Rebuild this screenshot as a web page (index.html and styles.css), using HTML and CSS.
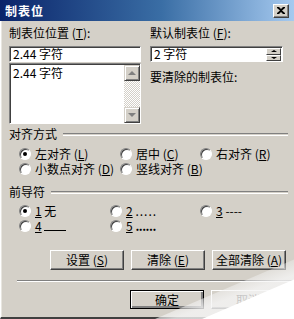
FILE: index.html
```html
<!DOCTYPE html>
<html lang="zh-CN">
<head>
<meta charset="UTF-8" />
<title>制表位</title>
<link rel="stylesheet" href="styles.css">
</head>
<body>

<div class="dialog">

  <!-- Title bar -->
  <div class="titlebar">
    <span class="title">制表位</span>
    <button class="close-btn" aria-label="关闭">
      <svg width="8" height="7" viewBox="0 0 8 7"><path d="M0 0h2l2 2 2-2h2v1L5 3.5 8 6v1H6L4 5 2 7H0V6l3-2.5L0 1z" fill="#000"/></svg>
    </button>
  </div>

  <div class="content">

    <!-- Top: positions -->
    <div class="top">
      <div class="col-left">
        <div class="label">制表位位置 (<u>T</u>):</div>
        <div class="field">2.44 字符</div>
        <div class="listbox">
          <div class="list-items">
            <div>2.44 字符</div>
          </div>
          <div class="scrollbar">
            <div class="sb-btn"><span class="arrow up gray"></span></div>
            <div class="sb-track"></div>
            <div class="sb-btn"><span class="arrow down gray"></span></div>
          </div>
        </div>
      </div>
      <div class="col-right">
        <div class="label">默认制表位 (<u>F</u>):</div>
        <div class="field spinner">
          <span class="spin-value">2 字符</span>
          <div class="spin-btns">
            <div class="spin-btn"><span class="arrow up small"></span></div>
            <div class="spin-btn"><span class="arrow down small"></span></div>
          </div>
        </div>
        <div class="label clear-label">要清除的制表位:</div>
      </div>
    </div>

    <!-- Alignment -->
    <div class="group-head">
      <span>对齐方式</span>
      <span class="etched"></span>
    </div>
    <div class="radio-grid">
      <label class="radio-item"><span class="radio checked"></span>左对齐 (<u>L</u>)</label>
      <label class="radio-item"><span class="radio"></span>居中 (<u>C</u>)</label>
      <label class="radio-item"><span class="radio"></span>右对齐 (<u>R</u>)</label>
      <label class="radio-item"><span class="radio"></span>小数点对齐 (<u>D</u>)</label>
      <label class="radio-item"><span class="radio"></span>竖线对齐 (<u>B</u>)</label>
    </div>

    <!-- Leader -->
    <div class="group-head leader-head">
      <span>前导符</span>
      <span class="etched"></span>
    </div>
    <div class="radio-grid leader-grid">
      <label class="radio-item"><span class="radio checked"></span><u>1</u>&nbsp;无</label>
      <label class="radio-item"><span class="radio"></span><u>2</u>&nbsp;<span class="dots">.....</span></label>
      <label class="radio-item"><span class="radio"></span><u>3</u>&nbsp;<span class="dashes">----</span></label>
      <label class="radio-item"><span class="radio"></span><u>4</u>&nbsp;<span class="line"></span></label>
      <label class="radio-item"><span class="radio"></span><u>5</u>&nbsp;<span class="bold-dots">......</span></label>
    </div>

    <!-- Actions -->
    <div class="btn-row">
      <button class="btn">设置 (<u>S</u>)</button>
      <button class="btn">清除 (<u>E</u>)</button>
      <button class="btn">全部清除 (<u>A</u>)</button>
    </div>

    <div class="separator"></div>

    <div class="btn-row ok-row">
      <button class="btn default">确定</button>
      <button class="btn">取消</button>
    </div>
  </div>

  <!-- page curl corner -->
  <div class="curl-shadow"></div>
  <div class="curl"></div>
</div>

</body>
</html>
```

FILE: styles.css
```css
html, body {
  margin: 0;
  padding: 0;
  width: 294px;
  height: 319px;
  overflow: hidden;
  background: #d4d0c8;
  font-family: "Noto Sans CJK SC", "DejaVu Sans", sans-serif;
  font-size: 12px;
  line-height: 15px;
  color: #000;
}

u {
  text-decoration: underline;
  text-underline-offset: 1px;
}

.dialog {
  position: relative;
  width: 294px;
  height: 319px;
  box-sizing: border-box;
  background: #d4d0c8;
  border-left: 1px solid #fff;
  border-bottom: 2px solid #404040;
  box-shadow: inset 1px 0 #e8e6e0;
}

/* Title bar */
.titlebar {
  display: flex;
  align-items: center;
  height: 21px;
  margin-left: -1px;
  background: linear-gradient(to right, #0a246a, #3a6ea5 55%, #a6caf0);
}

.title {
  color: #fff;
  font-weight: bold;
  font-size: 12px;
  letter-spacing: 1px;
  padding-left: 5px;
  line-height: 21px;
}

.close-btn {
  margin-left: auto;
  margin-right: 5px;
  width: 16px;
  height: 14px;
  padding: 0;
  display: flex;
  align-items: center;
  justify-content: center;
  background: #d4d0c8;
  border: 1px solid;
  border-color: #fff #404040 #404040 #fff;
  box-shadow: inset -1px -1px #808080;
}

.content {
  padding: 0 0 0 8px;
}

/* Top section */
.top {
  display: flex;
  gap: 9px;
  padding-top: 4px;
}

.col-left {
  width: 132px;
}

.col-right {
  width: 133px;
}

.label {
  height: 16px;
  line-height: 16px;
  white-space: nowrap;
}

.field {
  margin-top: 5px;
  height: 16px;
  box-sizing: border-box;
  background: #fff;
  border: 1px solid;
  border-color: #808080 #fff #fff #808080;
  box-shadow: inset 1px 1px #404040;
  padding-left: 3px;
  line-height: 14px;
  white-space: nowrap;
}

.spinner {
  display: flex;
  align-items: center;
  padding-right: 1px;
}

.spin-value {
  flex: 1;
}

.spin-btns {
  display: flex;
  flex-direction: column;
  width: 15px;
  height: 13px;
  margin-top: 1px;
}

.spin-btn {
  flex: 1;
  display: flex;
  align-items: center;
  justify-content: center;
  background: #d4d0c8;
  border: 1px solid;
  border-color: #fff #404040 #404040 #fff;
  box-sizing: border-box;
}

.clear-label {
  margin-top: 7px;
}

/* List box */
.listbox {
  margin-top: 1px;
  height: 61px;
  display: flex;
  box-sizing: border-box;
  background: #fff;
  border: 1px solid;
  border-color: #808080 #fff #fff #808080;
  box-shadow: inset 1px 1px #404040;
  padding: 1px 0 0 1px;
}

.list-items {
  flex: 1;
  padding-left: 2px;
  line-height: 16px;
}

.scrollbar {
  width: 16px;
  display: flex;
  flex-direction: column;
}

.sb-btn {
  height: 16px;
  box-sizing: border-box;
  display: flex;
  align-items: center;
  justify-content: center;
  background: #d4d0c8;
  border: 1px solid;
  border-color: #d4d0c8 #404040 #404040 #d4d0c8;
  box-shadow: inset 1px 1px #fff, inset -1px -1px #808080;
}

.sb-track {
  flex: 1;
  background: repeating-conic-gradient(#fff 0 25%, #d4d0c8 0 50%) 0 0 / 2px 2px;
}

.arrow {
  width: 0;
  height: 0;
  border-left: 4px solid transparent;
  border-right: 4px solid transparent;
}

.arrow.up { border-bottom: 4px solid #000; }
.arrow.down { border-top: 4px solid #000; }
.arrow.gray.up { border-bottom-color: #808080; }
.arrow.gray.down { border-top-color: #808080; }

.arrow.small {
  border-left-width: 3px;
  border-right-width: 3px;
}
.arrow.small.up { border-bottom-width: 2px; }
.arrow.small.down { border-top-width: 2px; }

/* Groups */
.group-head {
  display: flex;
  align-items: center;
  height: 16px;
  line-height: 16px;
  margin-top: 2px;
  padding-right: 6px;
}

.leader-head {
  margin-top: 8px;
}

.etched {
  flex: 1;
  height: 1px;
  margin-left: 6px;
  border-top: 1px solid #808080;
  border-bottom: 1px solid #fff;
}

.radio-grid {
  display: grid;
  grid-template-columns: 101px 80px auto;
  grid-auto-rows: 15px;
  margin-top: 4px;
  padding-left: 10px;
}

.leader-grid {
  grid-template-columns: 91px 90px auto;
  margin-top: 3px;
}

.radio-item {
  display: flex;
  align-items: center;
  height: 15px;
  line-height: 14px;
  white-space: nowrap;
}

.radio {
  position: relative;
  flex: none;
  width: 12px;
  height: 12px;
  box-sizing: border-box;
  margin-right: 4px;
  border-radius: 50%;
  background: #fff;
  border: 1px solid;
  border-color: #808080 #fff #fff #808080;
  box-shadow: inset 1px 1px #404040;
}

.radio.checked::after {
  content: '';
  position: absolute;
  left: 3px;
  top: 3px;
  width: 4px;
  height: 4px;
  border-radius: 50%;
  background: #000;
}

.dots {
  letter-spacing: 1px;
}

.line {
  display: inline-block;
  width: 22px;
  height: 10px;
  border-bottom: 1px solid #000;
}

.bold-dots {
  font-weight: bold;
  letter-spacing: -0.5px;
}

/* Buttons */
.btn-row {
  display: flex;
  gap: 7px;
  margin-top: 17px;
  padding-left: 41px;
}

.btn {
  width: 74px;
  height: 20px;
  padding: 0;
  box-sizing: border-box;
  font-family: inherit;
  font-size: 12px;
  line-height: 14px;
  color: #000;
  background: #d4d0c8;
  border: 1px solid;
  border-color: #fff #404040 #404040 #fff;
  box-shadow: inset -1px -1px #808080;
  white-space: nowrap;
}

.btn.default {
  border: 1px solid #000;
  box-shadow: inset 1px 1px #fff, inset -2px -2px #808080;
}

.separator {
  margin-top: 10px;
  margin-left: 8px;
  height: 0;
  border-top: 1px solid #808080;
  border-bottom: 1px solid #fff;
}

.ok-row {
  margin-top: 8px;
  padding-left: 121px;
}

.ok-row .btn {
  height: 19px;
}

/* Page curl at the corner */
.curl-shadow {
  position: absolute;
  right: -1px;
  bottom: -2px;
  width: 140px;
  height: 60px;
  background: linear-gradient(160deg, rgba(212, 208, 200, 0) 35%, rgba(245, 245, 245, 0.8) 60%);
  clip-path: polygon(100% 0, 100% 100%, 0 100%);
}

.curl {
  position: absolute;
  right: -1px;
  bottom: -2px;
  width: 93px;
  height: 40px;
  background: #fff;
  clip-path: polygon(100% 0, 100% 100%, 0 100%);
}
```
